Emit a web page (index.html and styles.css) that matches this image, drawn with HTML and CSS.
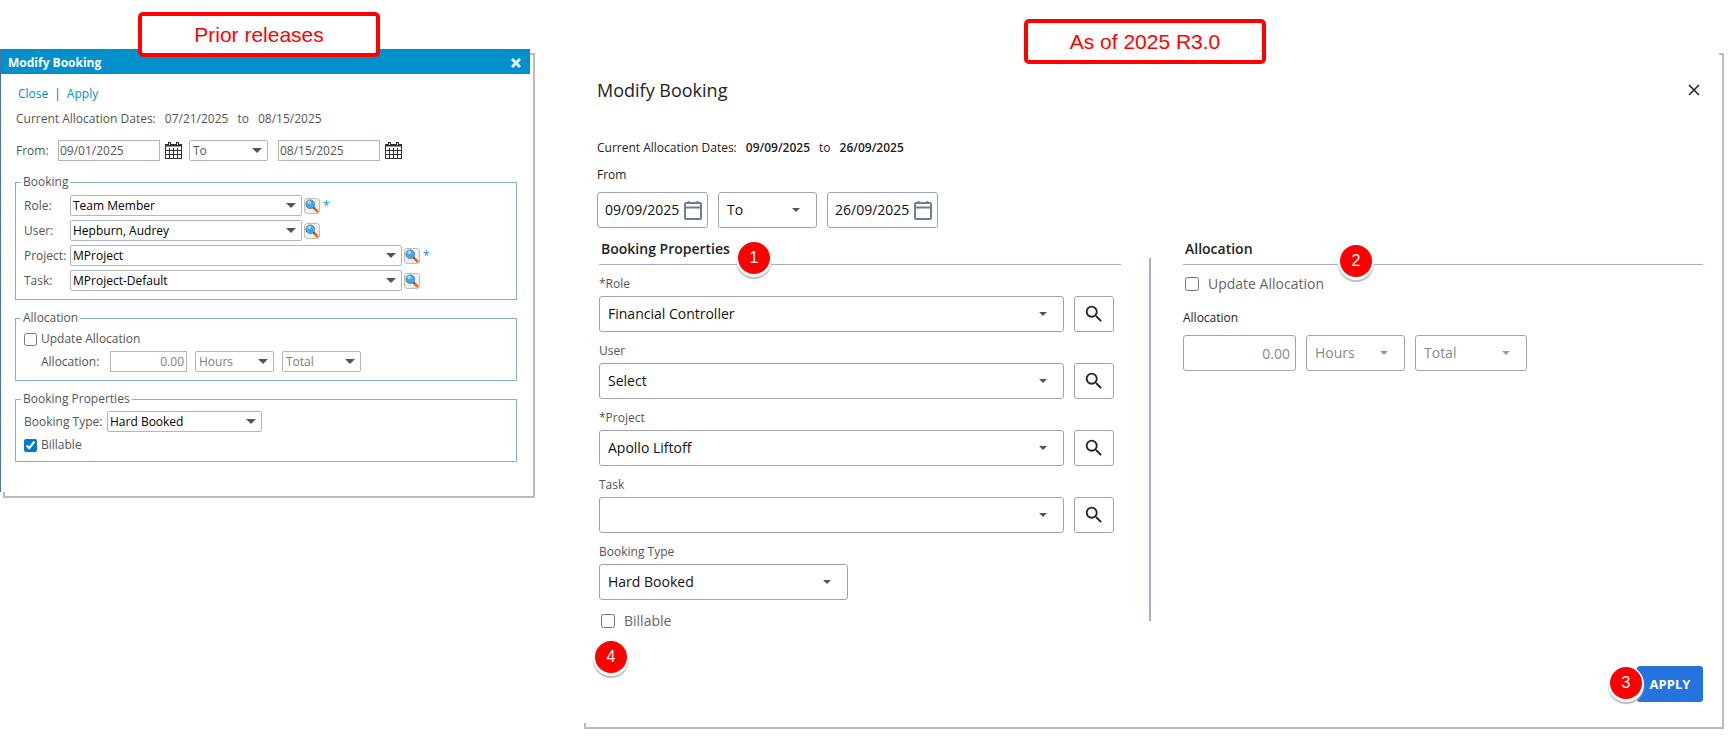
FILE: index.html
```html
<!DOCTYPE html>
<html lang="en">
<head>
    <meta charset="UTF-8">
    <meta name="viewport" content="width=device-width, initial-scale=1.0">
    <title>Modify Booking</title>
    <link rel="stylesheet" href="styles.css">
</head>
<body>
    <!-- Shared icons -->
    <svg class="icon-defs" aria-hidden="true">
        <symbol id="icon-grid-calendar" viewBox="0 0 17 17">
            <path d="M1 4h15v12H1z" fill="#fff"/>
            <path d="M0 2h17v3H0zM0 2h1v15H0zM16 2h1v15h-1zM0 16h17v1H0z" fill="#333"/>
            <path d="M1 4h15v1H1z" fill="#999"/>
            <path d="M1 8.500h15M1 12.500h15M4.500 6v10M8.500 6v10M12.500 6v10" stroke="#333" stroke-width="1"/>
            <path d="M3 0h3v4H3zM11 0h3v4h-3z" fill="#222"/>
            <path d="M4 1h1v2H4zM12 1h1v2h-1z" fill="#fff"/>
        </symbol>
        <symbol id="icon-lens" viewBox="0 0 16 16">
            <path d="M10 10l4 4" stroke="#ee6a24" stroke-width="3" stroke-linecap="round"/>
            <path d="M9 9l2 2" stroke="#555" stroke-width="2"/>
            <circle cx="6" cy="6" r="5" fill="#3fa9e8" stroke="#5a86ad" stroke-width="1"/>
            <circle cx="5" cy="4" r="2" fill="#a9dcf8"/>
        </symbol>
        <symbol id="icon-calendar" viewBox="0 0 18 20">
            <path d="M2 3h14a1 1 0 0 1 1 1v14a1 1 0 0 1-1 1H2a1 1 0 0 1-1-1V4a1 1 0 0 1 1-1zM1 7.500h16M4.500 1v2M13.500 1v2" fill="none" stroke="#6f7f8f" stroke-width="2"/>
        </symbol>
        <symbol id="icon-search" viewBox="0 0 24 24">
            <path d="M15.500 14h-.79l-.28-.27A6.471 6.471 0 0 0 16 9.500 6.500 6.500 0 1 0 9.500 16c1.610 0 3.090-.59 4.230-1.570l.27.28v.79l5 4.990L20.490 19l-4.990-5zm-6 0C7.010 14 5 11.990 5 9.500S7.010 5 9.500 5 14 7.010 14 9.500 11.990 14 9.500 14z" fill="#222"/>
        </symbol>
    </svg>

    <main class="comparison">
        <section class="dialog old-dialog">
            <p class="release-note">Prior releases</p>
            <header class="old-titlebar">
                <h2>Modify Booking</h2>
                <button class="old-close" type="button" aria-label="Close window">
                    <svg width="10" height="10" viewBox="0 0 10 10"><path d="M1 1l8 8M9 1l-8 8" stroke="#e6f3fa" stroke-width="3"/></svg>
                </button>
            </header>

            <form class="old-body">
                <nav class="old-links"><a href="#">Close</a><span>|</span><a href="#">Apply</a></nav>
                <p class="old-dates"><span>Current Allocation Dates:</span><span>07/21/2025</span><span>to</span><span>08/15/2025</span></p>

                <div class="old-from">
                    <label for="old-from">From:</label>
                    <input class="old-input old-date" id="old-from" type="text" value="09/01/2025">
                    <button class="plain-icon" type="button" aria-label="Pick start date"><svg width="17" height="17"><use href="#icon-grid-calendar"/></svg></button>
                    <span class="old-select old-short"><select aria-label="Range type"><option>To</option></select></span>
                    <input class="old-input old-date" type="text" value="08/15/2025" aria-label="End date">
                    <button class="plain-icon" type="button" aria-label="Pick end date"><svg width="17" height="17"><use href="#icon-grid-calendar"/></svg></button>
                </div>

                <fieldset class="old-group">
                    <legend>Booking</legend>
                    <div class="old-rows">
                        <div class="old-row">
                            <label for="old-role">Role:</label>
                            <span class="old-select old-medium"><select id="old-role"><option>Team Member</option></select></span>
                            <button class="old-lookup" type="button" aria-label="Find role"><svg width="14" height="14"><use href="#icon-lens"/></svg></button>
                            <span class="old-required">*</span>
                        </div>
                        <div class="old-row">
                            <label for="old-user">User:</label>
                            <span class="old-select old-medium"><select id="old-user"><option>Hepburn, Audrey</option></select></span>
                            <button class="old-lookup" type="button" aria-label="Find user"><svg width="14" height="14"><use href="#icon-lens"/></svg></button>
                        </div>
                        <div class="old-row">
                            <label for="old-project">Project:</label>
                            <span class="old-select old-wide"><select id="old-project"><option>MProject</option></select></span>
                            <button class="old-lookup" type="button" aria-label="Find project"><svg width="14" height="14"><use href="#icon-lens"/></svg></button>
                            <span class="old-required">*</span>
                        </div>
                        <div class="old-row">
                            <label for="old-task">Task:</label>
                            <span class="old-select old-wide"><select id="old-task"><option>MProject-Default</option></select></span>
                            <button class="old-lookup" type="button" aria-label="Find task"><svg width="14" height="14"><use href="#icon-lens"/></svg></button>
                        </div>
                    </div>
                </fieldset>

                <fieldset class="old-group">
                    <legend>Allocation</legend>
                    <div class="old-rows">
                        <label class="old-check"><input type="checkbox">Update Allocation</label>
                        <div class="old-allocation">
                            <label for="old-amount">Allocation:</label>
                            <input class="old-input old-amount" id="old-amount" type="text" value="0.00" disabled>
                            <span class="old-select old-short"><select aria-label="Allocation unit" disabled><option>Hours</option></select></span>
                            <span class="old-select old-short"><select aria-label="Allocation basis" disabled><option>Total</option></select></span>
                        </div>
                    </div>
                </fieldset>

                <fieldset class="old-group">
                    <legend>Booking Properties</legend>
                    <div class="old-rows old-properties">
                        <div class="old-type">
                            <label for="old-type">Booking Type:</label>
                            <span class="old-select old-regular"><select id="old-type"><option>Hard Booked</option></select></span>
                        </div>
                        <label class="old-check"><input type="checkbox" checked>Billable</label>
                    </div>
                </fieldset>
            </form>
        </section>

        <section class="dialog new-dialog">
            <p class="release-note">As of 2025 R3.0</p>
            <header class="new-header">
                <h2>Modify Booking</h2>
                <button class="new-close" type="button" aria-label="Close">
                    <svg width="12" height="12" viewBox="0 0 12 12"><path d="M1 1l10 10M11 1L1 11" stroke="#222" stroke-width="1.500"/></svg>
                </button>
            </header>

            <form class="new-body">
                <p class="new-dates"><span>Current Allocation Dates:</span><b>09/09/2025</b><span>to</span><b>26/09/2025</b></p>
                <label class="new-label dark" for="new-from">From</label>
                <div class="new-range">
                    <span class="new-date">
                        <input id="new-from" type="text" value="09/09/2025">
                        <button class="plain-icon" type="button" aria-label="Pick start date"><svg width="18" height="20"><use href="#icon-calendar"/></svg></button>
                    </span>
                    <span class="new-select new-to"><select aria-label="Range type"><option>To</option></select></span>
                    <span class="new-date">
                        <input type="text" value="26/09/2025" aria-label="End date">
                        <button class="plain-icon" type="button" aria-label="Pick end date"><svg width="18" height="20"><use href="#icon-calendar"/></svg></button>
                    </span>
                </div>

                <div class="new-columns">
                    <section class="new-properties">
                        <h3>Booking Properties<span class="marker marker-one">1</span></h3>
                        <div class="new-field">
                            <label class="new-label" for="new-role">*Role</label>
                            <div class="new-picker">
                                <span class="new-select"><select id="new-role"><option>Financial Controller</option></select></span>
                                <button class="new-search" type="button" aria-label="Find role"><svg width="22" height="22"><use href="#icon-search"/></svg></button>
                            </div>
                        </div>
                        <div class="new-field">
                            <label class="new-label" for="new-user">User</label>
                            <div class="new-picker">
                                <span class="new-select"><select id="new-user"><option>Select</option></select></span>
                                <button class="new-search" type="button" aria-label="Find user"><svg width="22" height="22"><use href="#icon-search"/></svg></button>
                            </div>
                        </div>
                        <div class="new-field">
                            <label class="new-label" for="new-project">*Project</label>
                            <div class="new-picker">
                                <span class="new-select"><select id="new-project"><option>Apollo Liftoff</option></select></span>
                                <button class="new-search" type="button" aria-label="Find project"><svg width="22" height="22"><use href="#icon-search"/></svg></button>
                            </div>
                        </div>
                        <div class="new-field">
                            <label class="new-label" for="new-task">Task</label>
                            <div class="new-picker">
                                <span class="new-select"><select id="new-task"><option></option></select></span>
                                <button class="new-search" type="button" aria-label="Find task"><svg width="22" height="22"><use href="#icon-search"/></svg></button>
                            </div>
                        </div>
                        <div class="new-field">
                            <label class="new-label" for="new-type">Booking Type</label>
                            <span class="new-select new-type"><select id="new-type"><option>Hard Booked</option></select></span>
                        </div>
                        <div class="new-billable">
                            <label class="new-check"><input type="checkbox">Billable</label>
                            <span class="marker marker-four">4</span>
                        </div>
                    </section>

                    <div class="new-divider"></div>

                    <section class="new-allocation">
                        <h3>Allocation<span class="marker marker-two">2</span></h3>
                        <label class="new-check"><input type="checkbox">Update Allocation</label>
                        <label class="new-label dark" for="new-amount">Allocation</label>
                        <div class="new-amounts">
                            <input class="new-amount" id="new-amount" type="text" value="0.00" disabled>
                            <span class="new-select new-hours"><select aria-label="Allocation unit" disabled><option>Hours</option></select></span>
                            <span class="new-select new-total"><select aria-label="Allocation basis" disabled><option>Total</option></select></span>
                        </div>
                    </section>
                </div>

                <footer class="new-footer">
                    <button class="new-apply" type="button">APPLY</button>
                    <span class="marker marker-three">3</span>
                </footer>
            </form>
        </section>
    </main>
</body>
</html>
```
FILE: styles.css
```css
* {
    box-sizing: border-box;
}
body {
    margin: 0;
    background: #fff;
    font-family: "Open Sans", "Noto Sans", sans-serif;
    font-size: 12px;
    line-height: 16px;
    color: #555;
}
h2, h3, p {
    margin: 0;
}
a {
    color: #0091cd;
    text-decoration: none;
}
input, select, button {
    font: inherit;
    color: inherit;
    margin: 0;
}
svg {
    display: block;
}
.icon-defs {
    position: absolute;
    width: 0;
    height: 0;
}
.comparison {
    display: grid;
    grid-template-columns: 530fr 1138fr;
    column-gap: 51px;
    align-items: start;
    padding: 49px 16px 10px 0;
}

/* Dialog frame with an offset outline behind it */
.dialog {
    position: relative;
    background: #fff;
    box-shadow: 4px 5px 0 -1px #fff, 4px 5px 0 1px #bbb;
}
.release-note {
    position: absolute;
    width: 242px;
    border: 4px solid #f00;
    border-radius: 5px;
    background: #fff;
    color: #f00;
    font: 21px/37px "Liberation Sans", Arial, sans-serif;
    text-align: center;
}
.old-dialog .release-note {
    left: 137px;
    top: -37px;
}
.new-dialog .release-note {
    left: 443px;
    top: -30px;
}
.plain-icon {
    padding: 0;
    border: 0;
    background: none;
    cursor: pointer;
}

/* Old dialog */
.old-dialog {
    border-left: 1px solid #4a70a5;
}
.old-titlebar {
    display: flex;
    align-items: center;
    justify-content: space-between;
    height: 25px;
    padding: 2px 9px 0 7px;
    background: #0091cd;
    color: #fff;
}
.old-titlebar h2 {
    font-size: 12px;
    font-weight: 700;
}
.old-close {
    padding: 0;
    border: 0;
    background: none;
}
.old-body {
    padding: 12px 13px 30px 14px;
}
.old-links {
    display: flex;
    gap: 6px;
    padding-left: 3px;
}
.old-dates {
    display: flex;
    gap: 9px;
    margin: 9px 0 13px;
    padding-left: 1px;
}
.old-from {
    display: flex;
    align-items: center;
    margin-bottom: 13px;
    padding-left: 1px;
}
.old-from label {
    width: 42px;
}
.old-from .plain-icon {
    margin: 0 7px 0 5px;
}
.old-from .old-select {
    margin-right: 10px;
}
.old-input {
    height: 21px;
    padding: 0 1px;
    border: 1px solid #adb8bf;
    border-radius: 0;
    background: #fff;
}
.old-date {
    width: 102px;
}
.old-amount {
    width: 77px;
    padding-right: 2px;
    text-align: right;
}
.old-input:disabled, .old-select select:disabled {
    color: #808080;
    opacity: 1;
}
.old-select, .new-select {
    position: relative;
    display: block;
}
.old-select select, .new-select select {
    display: block;
    width: 100%;
    appearance: none;
    background: #fff;
}
.old-select select {
    height: 21px;
    padding: 0 20px 0 2px;
    border: 1px solid #adb8bf;
    border-radius: 2px;
    color: #000;
}
.old-select::after {
    content: "";
    position: absolute;
    right: 6px;
    top: 8px;
    border: 5px solid transparent;
    border-top-color: #555;
    border-bottom: 0;
    pointer-events: none;
}
.old-short {
    width: 79px;
}
.old-short select {
    padding-left: 3px;
    color: #555;
}
.old-regular {
    width: 155px;
}
.old-medium {
    width: 232px;
}
.old-wide {
    width: 332px;
}
.old-group {
    margin: 0 0 10px;
    padding: 0 5px 8px;
    border: 1px solid #84b1cc;
}
.old-group:last-child {
    margin-bottom: 0;
}
.old-group legend {
    padding: 0 2px;
}
.old-rows {
    display: grid;
    gap: 4px;
    padding: 5px 0 0 3px;
}
.old-properties {
    gap: 5px;
    padding-top: 4px;
}
.old-row, .old-type, .old-allocation {
    display: flex;
    align-items: center;
}
.old-row label {
    width: 46px;
}
.old-type label {
    width: 83px;
}
.old-allocation {
    gap: 8px;
    padding-left: 17px;
}
.old-allocation label {
    width: 61px;
}
.old-lookup {
    display: grid;
    place-items: center;
    width: 16px;
    height: 16px;
    margin: 0 3px 0 2px;
    padding: 0;
    border: 1px solid #c3bfb0;
    border-radius: 3px;
    background: #f1efec;
}
.old-required {
    color: #0091cd;
}
.old-check {
    display: flex;
    align-items: center;
    gap: 4px;
}
.old-check input {
    width: 13px;
    height: 13px;
    accent-color: #0078d7;
}

/* New dialog */
.new-dialog {
    padding: 29px 16px 21px;
}
.new-header {
    display: flex;
    align-items: center;
    justify-content: space-between;
    margin-bottom: 38px;
    color: #222;
}
.new-header h2 {
    font-size: 18px;
    font-weight: 400;
    line-height: 24px;
}
.new-close {
    padding: 0;
    margin-right: 3px;
    border: 0;
    background: none;
}
.new-dates {
    display: flex;
    gap: 9px;
    margin-bottom: 11px;
    color: #222;
}
.new-dates b {
    font-weight: 600;
}
.new-label {
    display: block;
}
.dark {
    color: #222;
}
.new-range {
    display: flex;
    gap: 10px;
    margin: 9px 0 11px;
}
.new-date {
    display: flex;
    align-items: center;
    justify-content: space-between;
    width: 111px;
    height: 36px;
    padding: 0 5px 0 7px;
    border: 1px solid #a0a3a8;
    border-radius: 3px;
}
.new-date input {
    width: 78px;
    padding: 0;
    border: 0;
    background: none;
    font-size: 14px;
    color: #111;
}
.new-select select {
    height: 36px;
    padding: 0 28px 0 8px;
    border: 1px solid #a0a3a8;
    border-radius: 3px;
    font-size: 14px;
    color: #111;
}
.new-select select:disabled {
    color: #888;
    opacity: 1;
}
.new-select::after {
    content: "";
    position: absolute;
    right: 17px;
    top: 16px;
    border: 4px solid transparent;
    border-top-color: #555;
    border-bottom: 0;
    pointer-events: none;
}
.new-select:has(select:disabled)::after {
    border-top-color: #999;
}
.new-to, .new-hours {
    width: 99px;
}
.new-total {
    width: 112px;
}
.new-type {
    width: 249px;
}
.new-columns {
    display: grid;
    grid-template-columns: 552fr 2px 552fr;
}
.new-columns h3 {
    position: relative;
    margin-bottom: 11px;
    padding: 0 2px 5px;
    border-bottom: 1px solid #9fb1cf;
    font-size: 14px;
    font-weight: 600;
    line-height: 20px;
    color: #222;
}
.new-properties {
    margin-right: 28px;
    padding-left: 2px;
}
.new-allocation {
    margin-left: 32px;
}
.new-divider {
    margin: 19px 0 10px;
    background: #9fb1cf;
}
.new-field {
    margin-bottom: 11px;
}
.new-field .new-label {
    margin-bottom: 4px;
}
.new-picker {
    display: flex;
    gap: 10px;
    padding-right: 7px;
}
.new-picker .new-select {
    flex: 1;
}
.new-search {
    display: grid;
    place-items: center;
    width: 40px;
    height: 36px;
    padding: 0;
    border: 1px solid #a0a3a8;
    border-radius: 3px;
    background: #fff;
}
.new-check {
    display: flex;
    align-items: center;
    gap: 9px;
    padding-left: 2px;
    font-size: 14px;
    line-height: 20px;
    color: #666;
}
.new-check input {
    width: 14px;
    height: 14px;
}
.new-billable {
    position: relative;
}
.new-allocation h3 {
    margin-bottom: 9px;
}
.new-allocation .new-label {
    margin: 16px 0 9px;
}
.new-amounts {
    display: flex;
    gap: 10px;
}
.new-amount {
    width: 113px;
    height: 36px;
    padding: 0 5px;
    border: 1px solid #a0a3a8;
    border-radius: 3px;
    background: #fff;
    font-size: 14px;
    text-align: right;
    color: #888;
}
.new-footer {
    position: relative;
    display: flex;
    justify-content: flex-end;
    margin-top: 35px;
}
.new-apply {
    width: 66px;
    height: 36px;
    padding: 0;
    border: 0;
    border-radius: 3px;
    background: #2573dd;
    color: #fff;
    font-size: 13px;
    font-weight: 700;
}

/* Numbered callouts */
.marker {
    position: absolute;
    width: 32px;
    height: 32px;
    border-radius: 50%;
    background: #f00;
    box-shadow: 0 1px 0 2px #fff, 0 3px 1px 2px #bbb;
    color: #fff;
    font: 16px/32px "Liberation Sans", Arial, sans-serif;
    text-align: center;
}
.marker-one {
    left: 139px;
    top: 3px;
}
.marker-two {
    left: 157px;
    top: 6px;
}
.marker-three {
    right: 61px;
    top: 1px;
}
.marker-four {
    left: -4px;
    top: 30px;
}
```
